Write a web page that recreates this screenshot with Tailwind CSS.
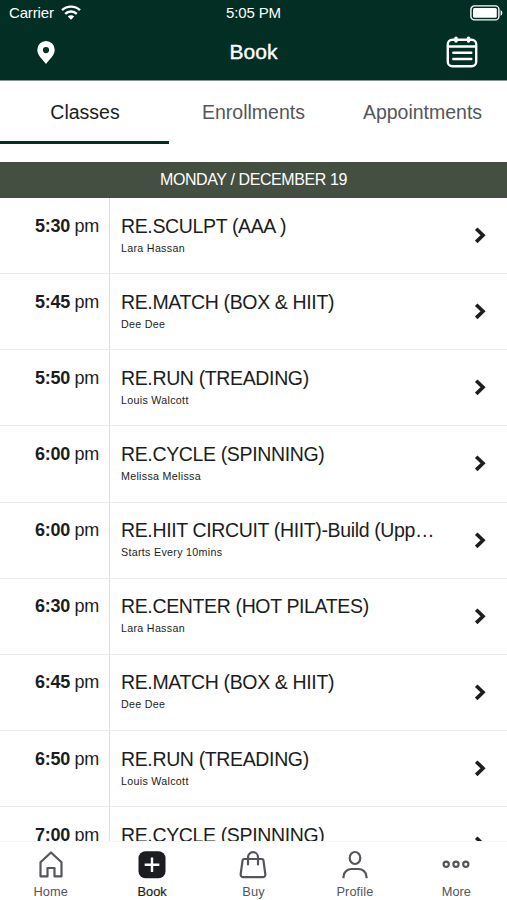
<!DOCTYPE html>
<html lang="en">
<head>
<meta charset="utf-8">
<title>Book</title>
<script src="https://cdn.jsdelivr.net/npm/@tailwindcss/browser@4"></script>
</head>
<body class="bg-white font-['Liberation_Sans',Arial,sans-serif] text-[#1c1d20]">
<div class="flex h-[900px] w-[507px] flex-col overflow-hidden">
  <header class="h-[80px] shrink-0 bg-[#022e23] text-white">
    <div class="grid h-[25px] grid-cols-3 items-center">
      <div class="flex items-center gap-[7px] pl-[9px]">
        <span class="text-[15px] leading-[25px] tracking-[-0.15px]">Carrier</span>
        <svg class="h-[15px] w-[20px]" viewBox="0 0 20 15" fill="none" stroke="#fff" stroke-width="2.4"><path d="M1 5.2a13 13 0 0 1 18 0M4.2 8.8a8.3 8.3 0 0 1 11.6 0"/><path d="M10 14.8 6.8 11.6a4.6 4.6 0 0 1 6.4 0z" fill="#fff" stroke="none"/></svg>
      </div>
      <div class="text-center text-[15px] leading-[23px] tracking-[-0.15px]">5:05 PM</div>
      <svg class="mr-[4px] h-[16px] w-[33px] justify-self-end" viewBox="0 0 33 16"><rect x=".9" y=".9" width="28" height="14" rx="3.5" fill="none" stroke="#fff" stroke-width="1.4"/><rect x="3" y="3" width="23.8" height="9.8" rx="1.5" fill="#fff"/><path d="M30.6 5v6q1.8-.8 1.8-3t-1.8-3z" fill="#fff"/></svg>
    </div>
    <div class="grid h-[54px] grid-cols-3 items-center">
      <svg class="ml-[37px] h-[23px] w-[18px]" viewBox="0 0 18 23"><path fill="#fff" fill-rule="evenodd" d="M9 0a8.700 8.700 0 0 0-8.700 8.800C.3 14.500 5.400 18.200 9 23c3.600-4.800 8.700-8.500 8.700-14.200A8.700 8.700 0 0 0 9 0zm0 6a3.100 3.100 0 1 1 0 6.200A3.100 3.100 0 0 1 9 6z"/></svg>
      <h1 class="text-center text-[21px] leading-[54px] [-webkit-text-stroke:0.4px_#fff]">Book</h1>
      <svg class="mr-[29px] h-[32px] w-[32px] justify-self-end" viewBox="0 0 32 32" fill="none" stroke="#fff" stroke-width="2.400" stroke-linecap="round"><rect x="1.800" y="3.700" width="28.400" height="26.500" rx="4.500"/><path d="M2 10.500h28M7.300 16.800h18M7.300 23h18"/><path stroke-width="3.600" d="M10 2.300v2.700M22.500 2.300v2.700"/></svg>
    </div>
  </header>
  <nav class="grid h-[64px] shrink-0 grid-cols-3 border-t border-[#86958f] text-center text-[19.500px] leading-[62px] text-[#54565b]">
    <div class="h-[63px] border-b-[3px] border-[#022e23] pl-px text-[#1c1d20]"><div class="h-[60px]">Classes</div></div>
    <div>Enrollments</div>
    <div>Appointments</div>
  </nav>
  <h2 class="mt-[18px] h-[36px] shrink-0 bg-[#444e41] text-center text-[16px] leading-[36px] tracking-[-0.4px] text-white">MONDAY / DECEMBER 19</h2>
  <main id="classes" class="min-h-0 flex-1 overflow-hidden"></main>
  <footer class="grid h-[59.500px] shrink-0 grid-cols-5 border-t border-[#f6f6f6] bg-white text-[12.800px] text-[#54565b]">
    <div class="flex flex-col items-center pt-[8px]">
      <svg class="h-[30px] w-[30px]" viewBox="0 0 30 30" fill="none" stroke="#54565b" stroke-width="2.200" stroke-linejoin="round"><path d="M4.500 12.300 15 2.500l10.500 9.800v14h-7v-8.300h-7v8.300h-7z"/></svg>
      <span class="leading-[24px] tracking-[0.100px]">Home</span>
    </div>
    <div class="flex flex-col items-center pt-[8px] text-[#1c1d20]">
      <svg class="h-[30px] w-[30px]" viewBox="0 0 30 30"><rect x="1.500" y="1.300" width="27" height="27" rx="7" fill="#1c1d20"/><path d="M15 7.500v14.600M7.700 14.800h14.600" stroke="#fff" stroke-width="2.400"/></svg>
      <span class="leading-[24px] [-webkit-text-stroke:0.2px_#1c1d20]">Book</span>
    </div>
    <div class="flex flex-col items-center pt-[8px]">
      <svg class="h-[30px] w-[30px]" viewBox="0 0 30 30" fill="none" stroke="#54565b" stroke-width="2.200"><path stroke-linejoin="round" d="M6 9h18q1.200 0 1.400 1.200l1.900 13.800q.3 3.200-2.800 3.200h-19q-3.100 0-2.800-3.200l1.900-13.800Q4.800 9 6 9z"/><path stroke-linecap="round" d="M10 14.500V7.200a5 5 0 0 1 10 0v7.300"/></svg>
      <span class="leading-[24px] tracking-[0.100px]">Buy</span>
    </div>
    <div class="flex flex-col items-center pt-[8px]">
      <svg class="h-[30px] w-[30px]" viewBox="0 0 30 30" fill="none" stroke="#54565b" stroke-width="2.200"><ellipse cx="15" cy="8" rx="5.300" ry="6"/><path d="M3.500 28.200v-1.500c0-4.500 4-7.700 8-7.700h7c4 0 8 3.200 8 7.700v1.500"/></svg>
      <span class="leading-[24px] tracking-[0.100px]">Profile</span>
    </div>
    <div class="flex flex-col items-center pt-[8px]">
      <svg class="h-[30px] w-[30px]" viewBox="0 0 30 30" fill="none" stroke="#54565b" stroke-width="2.200"><circle cx="5.200" cy="14.300" r="2.600"/><circle cx="15" cy="14.300" r="2.600"/><circle cx="24.800" cy="14.300" r="2.600"/></svg>
      <span class="leading-[24px]">More</span>
    </div>
  </footer>
</div>
<script>
const classes = [
  ['5:30', 'RE.SCULPT (AAA )', 'Lara Hassan'],
  ['5:45', 'RE.MATCH (BOX &amp; HIIT)', 'Dee Dee'],
  ['5:50', 'RE.RUN (TREADING)', 'Louis Walcott'],
  ['6:00', 'RE.CYCLE (SPINNING)', 'Melissa Melissa'],
  ['6:00', 'RE.HIIT CIRCUIT (HIIT)-Build (Upp…', 'Starts Every 10mins'],
  ['6:30', 'RE.CENTER (HOT PILATES)', 'Lara Hassan'],
  ['6:45', 'RE.MATCH (BOX &amp; HIIT)', 'Dee Dee'],
  ['6:50', 'RE.RUN (TREADING)', 'Louis Walcott'],
  ['7:00', 'RE.CYCLE (SPINNING)', 'Melissa Melissa'],
];
document.getElementById('classes').innerHTML = classes.map(([time, title, coach]) => `
  <div class="flex h-[76.14px] border-b border-[#e9eaeb]">
    <div class="w-[110px] shrink-0 border-r border-[#dcdfe0] pr-[10px] pt-[15.7px] text-right text-[18px] leading-[24px] tracking-[-0.3px]"><b>${time}</b> pm</div>
    <div class="w-[330px] shrink-0 pl-[11px] pt-[15.7px]">
      <div class="whitespace-nowrap text-[19.5px] leading-[24px] tracking-[-0.36px]">${title}</div>
      <div class="text-[10.700px] leading-[20px] tracking-[0.300px]">${coach}</div>
    </div>
    <svg class="ml-[34px] mt-[28px] h-[18px] w-[13px]" viewBox="0 0 13 18" fill="none" stroke="#1c1d20" stroke-width="3.600"><path d="M2.200 2.700 9 9.300l-6.800 6.600"/></svg>
  </div>`).join('');
</script>
</body>
</html></script>
